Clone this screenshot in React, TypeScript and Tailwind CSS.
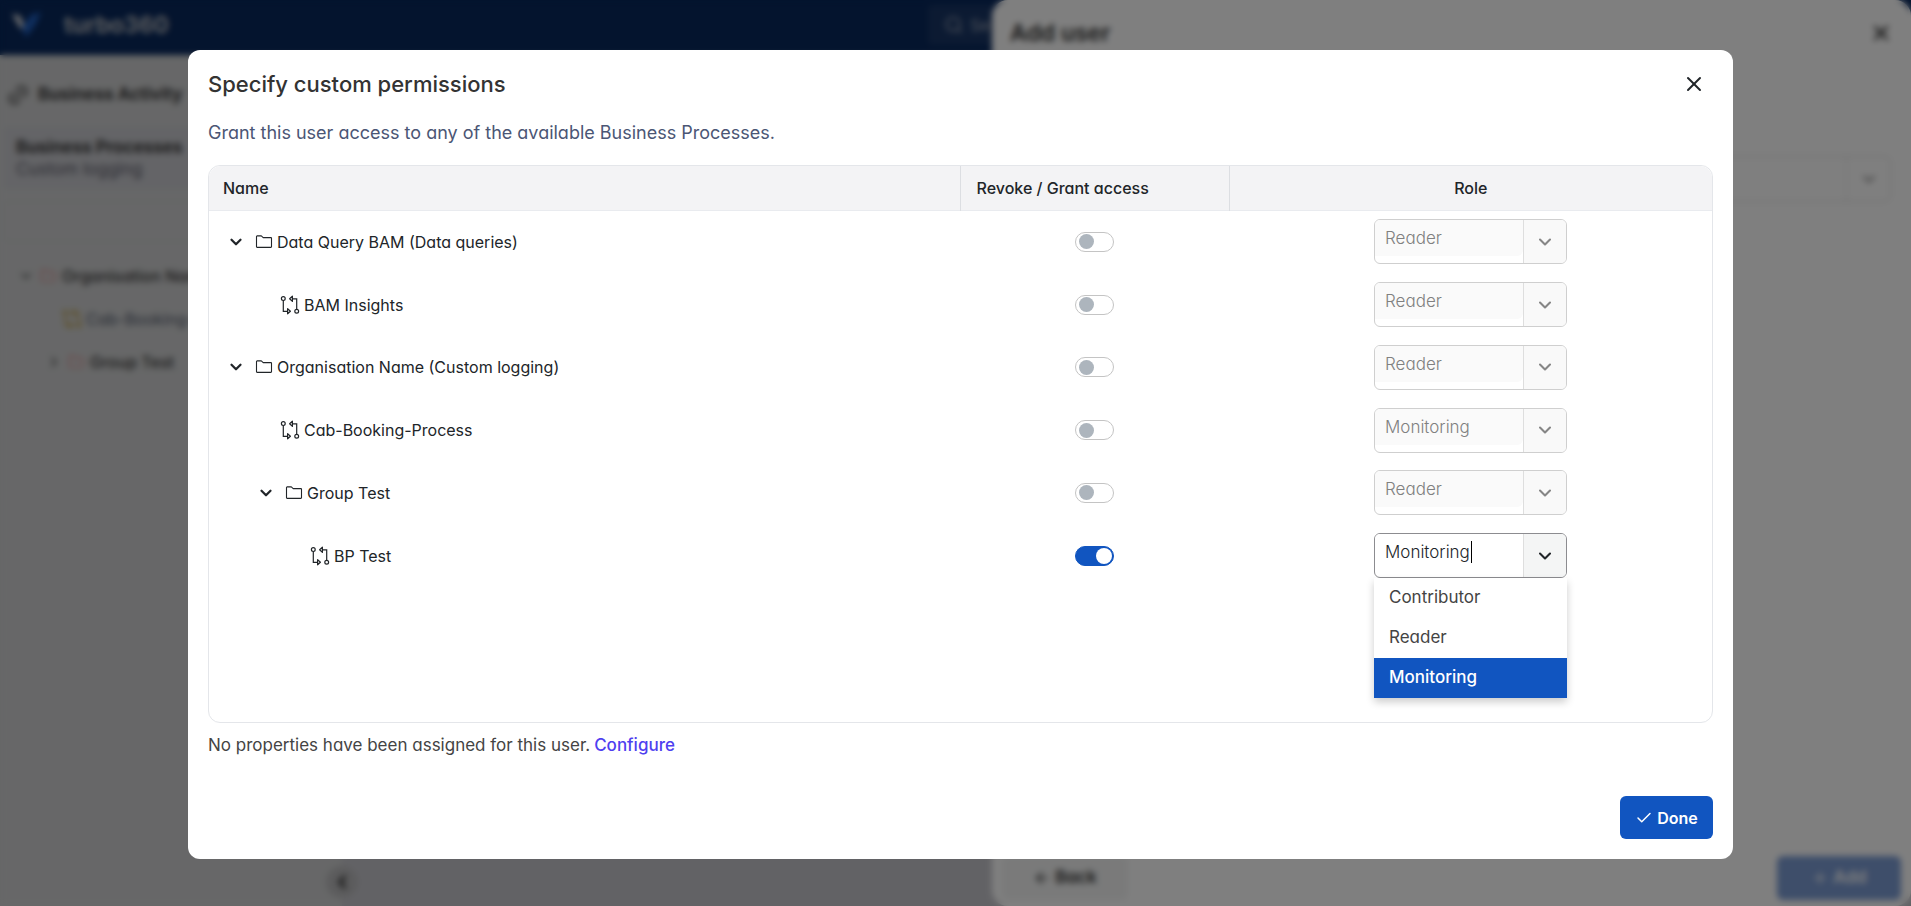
import { useState } from 'react';
import { ArrowLeft, Check, ChevronDown, ChevronLeft, ChevronRight, Folder, Link2, Plus, Search, X } from 'lucide-react';

type Role = 'Contributor' | 'Reader' | 'Monitoring';

interface PermissionRow {
  id: string;
  name: string;
  kind: 'folder' | 'process';
  indent: string;
  role: Role;
}

const roles: Role[] = ['Contributor', 'Reader', 'Monitoring'];

const rows: PermissionRow[] = [
  { id: 'data-query', name: 'Data Query BAM (Data queries)', kind: 'folder', indent: 'pl-[18px]', role: 'Reader' },
  { id: 'bam-insights', name: 'BAM Insights', kind: 'process', indent: 'pl-[71px]', role: 'Reader' },
  { id: 'organisation', name: 'Organisation Name (Custom logging)', kind: 'folder', indent: 'pl-[18px]', role: 'Reader' },
  { id: 'cab-booking', name: 'Cab-Booking-Process', kind: 'process', indent: 'pl-[71px]', role: 'Monitoring' },
  { id: 'group-test', name: 'Group Test', kind: 'folder', indent: 'pl-[48px]', role: 'Reader' },
  { id: 'bp-test', name: 'BP Test', kind: 'process', indent: 'pl-[101px]', role: 'Monitoring' },
];

const ProcessIcon = ({ className = 'text-[#212529]' }: { className?: string }) => (
  <svg viewBox="0 0 20 20" className={`h-5 w-5 shrink-0 ${className}`} fill="none" stroke="currentColor" strokeWidth="1.2">
    <circle cx="3.3" cy="3.6" r="1.9" />
    <path d="M3.3 5.5v10.8h4.2" />
    <path d="M7.6 13.6v5.2l2.8-2.6z" strokeLinejoin="round" />
    <circle cx="16.7" cy="16.3" r="1.9" />
    <path d="M16.7 14.4V3.8h-4" />
    <path d="M12.4 1.2v5.2L9.6 3.8z" strokeLinejoin="round" />
  </svg>
);

const FolderIcon = () => (
  <svg viewBox="0 0 18 16" className="h-4 w-[18px] shrink-0" fill="none" stroke="#212529" strokeWidth="1.1" strokeLinejoin="round">
    <path d="M1.5 12.8V2.5c0-.4.3-.6.6-.6h4.2l1.9 1.7h7.7c.4 0 .6.3.6.6v8.6c0 .4-.3.6-.6.6H2.1c-.4 0-.6-.3-.6-.6z" />
  </svg>
);

const Toggle = ({ label, checked, onChange }: { label: string; checked: boolean; onChange: () => void }) => (
  <label className="mx-auto flex w-[39px] cursor-pointer">
    <input type="checkbox" role="switch" aria-label={label} checked={checked} onChange={onChange} className="peer sr-only" />
    <span className="flex h-5 w-[39px] items-center rounded-full border border-[#c4c4c4] bg-white px-[3px] peer-checked:justify-end peer-checked:border-[#1155c0] peer-checked:bg-[#1155c0] peer-checked:px-px">
      <span className={checked ? 'h-4 w-4 rounded-full bg-white' : 'h-[15px] w-[15px] rounded-full bg-[#adb5bd]'} />
    </span>
  </label>
);

const RoleSelect = ({ label, value, enabled, onSelect }: { label: string; value: Role; enabled: boolean; onSelect: (role: Role) => void }) => {
  const [open, setOpen] = useState(enabled);
  const showMenu = enabled && open;

  return (
    <div className="relative mx-auto w-[193px]">
      <div className={`flex h-[45px] overflow-hidden rounded-md border ${enabled ? 'border-[#8c8c90]' : 'border-[#cfcfcf]'}`}>
        <div className="flex-1">
          <input
            type="text"
            aria-label={label}
            value={value}
            readOnly
            disabled={!enabled}
            className="block h-9 w-full rounded-br-md bg-white px-2.5 text-[17px] font-light text-[#212529] outline-none disabled:bg-[#fafafa] disabled:text-[#808080]"
          />
        </div>
        <button
          type="button"
          aria-label={`Show ${label} options`}
          disabled={!enabled}
          onClick={() => setOpen(!open)}
          className="flex w-[43px] items-center justify-center border-l border-[#dedede] bg-[#f4f5f5] text-[#212529] disabled:bg-[#f9f9f9] disabled:text-[#868686]"
        >
          <ChevronDown className="h-5 w-5" strokeWidth={2.5} />
        </button>
      </div>
      {showMenu && (
        <>
          {/* text caret */}
          <span className="absolute top-2 left-[97px] h-[22px] w-px bg-black" />
          <ul role="listbox" aria-label={label} className="absolute inset-x-0 top-[45px] z-10 bg-white text-left shadow-[0_4px_8px_rgba(0,0,0,0.2)]">
            {roles.map(role => (
              <li
                key={role}
                role="option"
                aria-selected={role === value}
                onClick={() => {
                  onSelect(role);
                  setOpen(false);
                }}
                className={`flex h-10 cursor-pointer items-center px-[15px] text-[17px] ${role === value ? 'bg-[#1155c0] font-medium text-white' : 'text-[#444]'}`}
              >
                {role}
              </li>
            ))}
          </ul>
        </>
      )}
    </div>
  );
};

const PageBehind = () => (
  <div className="absolute inset-0 flex flex-col bg-[#c5c5cb]" aria-hidden="true">
    <header className="flex h-[55px] shrink-0 items-center bg-[#08285c] pb-1.5 pl-3">
      <svg viewBox="0 0 30 26" className="h-[26px] w-[30px]">
        <path d="M0 2l8 2 5 12-4 1z" fill="#e8e8e8" />
        <path d="M14 25l-4-9L19 3l10-3-6 13z" fill="#1f5fc0" />
      </svg>
      <span className="ml-[22px] text-[23px] leading-8 font-semibold text-[#c8c8c8]">turbo360</span>
      <div className="mr-[919px] ml-auto flex h-10 w-16 items-center gap-1.5 rounded-l bg-[#183565] pl-4 text-[#a0a8b8]">
        <Search className="h-5 w-5 shrink-0" />
        <span className="text-base">Se</span>
      </div>
    </header>
    <div className="flex flex-1">
      <aside className="flex w-[342px] flex-col bg-[#cecfd0] text-[#383838]">
        <div className="flex h-20 items-center gap-2 pl-1.5 text-[17px] font-bold whitespace-nowrap">
          <Link2 className="h-6 w-6 -rotate-45" />
          Business Activity
        </div>
        <div className="mx-1 -mt-2 flex h-[62px] flex-col justify-center bg-[#c8c9ce] pl-3 text-[17px] leading-[22px]">
          <span className="font-bold">Business Processes</span>
          <span className="text-[#5a5a68]">Custom logging</span>
        </div>
        <div className="mx-1 mt-3 h-[41px] rounded border border-[#c6c6c9]" />
        <div className="mt-1 flex h-[43px] items-center gap-1 pt-4 pl-[18px] text-base font-medium whitespace-nowrap">
          <ChevronDown className="h-4 w-4" />
          <Folder className="h-4 w-5 text-[#d98a8a]" />
          Organisation Name
        </div>
        <div className="flex h-[43px] items-center gap-1 pt-4 pl-[62px] text-base text-[#50586a]">
          <ProcessIcon className="text-[#b89020]" />
          Cab-Booking-Process
        </div>
        <div className="flex h-[43px] items-center gap-1 pt-4 pl-[46px] text-base font-medium">
          <ChevronRight className="h-4 w-4" />
          <Folder className="h-4 w-5 text-[#d98a8a]" />
          Group Test
        </div>
        <div className="mt-auto -mr-4 mb-2 flex h-8 w-8 items-center justify-center self-end rounded-full bg-[#b8b8ba]">
          <ChevronLeft className="h-5 w-5" strokeWidth={4} />
        </div>
      </aside>
    </div>
  </div>
);

const AddUserPanel = () => (
  <div className="absolute inset-y-0 right-0 flex w-[919px] flex-col rounded-2xl bg-white" aria-hidden="true">
    <div className="flex h-[66px] items-center justify-between px-[18px] text-[#303030]">
      <h2 className="text-[23px] font-semibold">Add user</h2>
      <X className="h-6 w-6" strokeWidth={2.5} />
    </div>
    <div className="mx-5 mt-[90px] flex h-[46px] justify-end rounded-md border border-[#d8d8d8]">
      <div className="flex w-11 items-center justify-center border-l border-[#e4e4e4]">
        <ChevronDown className="h-5 w-5 text-[#606060]" />
      </div>
    </div>
    <div className="mt-auto mb-1.5 flex items-center justify-between px-2.5 text-[17px] font-semibold">
      <div className="flex h-11 w-[126px] items-center justify-center gap-1 rounded-md bg-[#f4f5f5] text-[#303030]">
        <ArrowLeft className="h-[18px] w-[18px]" /> Back
      </div>
      <div className="flex h-11 w-[124px] items-center justify-center gap-1 rounded-md bg-[#7c9cd4] text-white">
        <Plus className="h-[18px] w-[18px]" /> Add
      </div>
    </div>
  </div>
);

const App = () => {
  const [granted, setGranted] = useState<Record<string, boolean>>({ 'bp-test': true });
  const [selected, setSelected] = useState<Record<string, Role>>({});

  return (
    <div className="relative min-h-screen overflow-hidden font-['Inter','Noto_Sans',sans-serif] text-[#212529] [font-feature-settings:'cv11']">
      <PageBehind />
      <AddUserPanel />
      <div className="absolute inset-0 bg-black/50 backdrop-blur-[3px]" />

      <div className="relative pt-[50px] pr-[178px] pb-[46px] pl-[188px]">
        <section role="dialog" aria-modal="true" aria-labelledby="dialog-title" className="rounded-xl bg-white px-5 pb-5">
          <div className="flex h-[68px] items-center justify-between pr-[7px]">
            <h1 id="dialog-title" className="text-[22px] font-medium text-[#333]">Specify custom permissions</h1>
            <button type="button" aria-label="Close" className="flex h-6 w-6 items-center justify-center">
              <X className="h-6 w-6" strokeWidth={2} />
            </button>
          </div>
          <p className="flex h-[30px] items-center text-lg text-[#4b5675]">
            Grant this user access to any of the available Business Processes.
          </p>

          <div className="mt-[17px] rounded-xl border border-[#e4e6ea] pb-[135px]">
            <table className="h-[421px] w-full table-fixed border-collapse">
              <colgroup>
                <col />
                <col className="w-[269px]" />
                <col className="w-[483px]" />
              </colgroup>
              <thead>
                <tr className="h-11 border-b border-[#e9ebef] text-base">
                  <th className="rounded-tl-xl bg-[#f3f3f5] pl-3.5 text-left font-medium">Name</th>
                  <th className="border-l border-[#dcdee2] bg-[#f3f3f5] pl-4 text-left font-medium">Revoke / Grant access</th>
                  <th className="rounded-tr-xl border-l border-[#dcdee2] bg-[#f3f3f5] text-center font-medium">Role</th>
                </tr>
              </thead>
              <tbody>
                {rows.map(row => {
                  const enabled = !!granted[row.id];
                  return (
                    <tr key={row.id} className="text-base">
                      <td className={row.indent}>
                        <div className="flex items-center">
                          {row.kind === 'folder' ? (
                            <>
                              <button type="button" aria-label={`Collapse ${row.name}`} className="mr-2.5">
                                <ChevronDown className="h-[18px] w-[18px]" strokeWidth={3} />
                              </button>
                              <FolderIcon />
                            </>
                          ) : (
                            <ProcessIcon />
                          )}
                          <span className="ml-1">{row.name}</span>
                        </div>
                      </td>
                      <td>
                        <Toggle
                          label={`Grant access to ${row.name}`}
                          checked={enabled}
                          onChange={() => setGranted(prev => ({ ...prev, [row.id]: !prev[row.id] }))}
                        />
                      </td>
                      <td>
                        <RoleSelect
                          label={`Role for ${row.name}`}
                          value={selected[row.id] ?? row.role}
                          enabled={enabled}
                          onSelect={role => setSelected(prev => ({ ...prev, [row.id]: role }))}
                        />
                      </td>
                    </tr>
                  );
                })}
              </tbody>
            </table>
          </div>

          <p className="flex h-[46px] items-center gap-1 text-[17px] text-[#444]">
            No properties have been assigned for this user.
            <a href="#configure" className="font-medium text-[#4f3ff0]">Configure</a>
          </p>
          <div className="mt-[27px] flex justify-end">
            <button type="button" className="flex h-[43px] w-[93px] items-center justify-center gap-1 rounded-md bg-[#1155c0] text-base font-semibold text-white">
              <Check className="h-[18px] w-[18px]" strokeWidth={2} />
              Done
            </button>
          </div>
        </section>
      </div>
    </div>
  );
};

export default App;
